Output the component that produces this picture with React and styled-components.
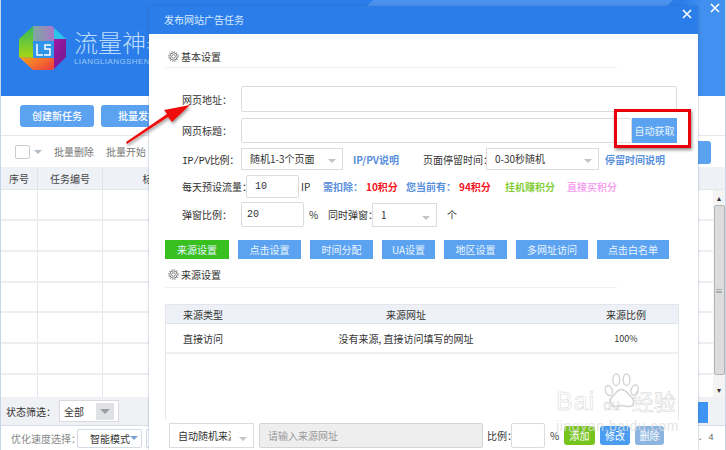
import React from "react";
import styled, { createGlobalStyle } from "styled-components";

const CJK = `"Noto Sans CJK SC", "Liberation Sans", sans-serif`;

function App() {
  return (
    <Desktop>
      <GlobalStyle />
      <MainWindow>
        <Header>
          <Streak />
          <Logo />
          <Brand>
            <BrandName>流量神器</BrandName>
            <BrandSub>LIANGLIANGSHEN</BrandSub>
          </Brand>
        </Header>
        <Toolbar>
          <ToolButton width={74}>创建新任务</ToolButton>
          <ToolButton width={74}>批量发布</ToolButton>
        </Toolbar>
        <BatchRow>
          <CheckBox />
          <SmallCaret />
          <BatchLink>批量删除</BatchLink>
          <BatchLink>批量开始</BatchLink>
        </BatchRow>
        <GridHead>
          <GridCol width={37}>序号</GridCol>
          <GridCol width={65}>任务编号</GridCol>
          <GridCol width={100}>标题</GridCol>
        </GridHead>
        <GridBody>
          {[31, 31, 31, 30, 31, 31, 22].map((h, i) => (
            <GridRow key={i} style={{ height: h }}>
              <GridCell width={37} />
              <GridCell width={65} />
            </GridRow>
          ))}
        </GridBody>
        <StatusBar>
          <StatusLabel>状态筛选：</StatusLabel>
          <StatusSelect>
            全部
            <StatusCaret />
          </StatusSelect>
        </StatusBar>
        <FootBar>
          <FootLabel>优化速度选择：</FootLabel>
          <FootSelect>
            智能模式
            <SmallCaret />
          </FootSelect>
          <FootSelect />
        </FootBar>
      </MainWindow>

      <WindowClose top={0} left={707} />

      <SideButton top={141} height={23} width={13} color="#5ba3f0" round />
      <SideButton top={402} height={21} width={10} color="#3d94f2" />
      <Version>0. 4</Version>

      <Scrollbar>
        <ScrollEnd>▴</ScrollEnd>
        <ScrollThumb>≡</ScrollThumb>
        <ScrollGap />
        <ScrollEnd>▾</ScrollEnd>
      </Scrollbar>

      <Dialog>
        <DialogTitle>
          发布网站广告任务
          <WindowClose top={0} left={530} />
        </DialogTitle>
        <DialogBody>
          <SectionHead>
            <Gear />
            基本设置
          </SectionHead>

          <FormRow top={18}>
            <FieldLabel width={59}>网页地址：</FieldLabel>
            <TextBox width={436} height={26} />
          </FormRow>
          <FormRow top={6}>
            <FieldLabel width={59}>网页标题：</FieldLabel>
            <TextBox width={391} height={25} />
            <FetchButton>自动获取</FetchButton>
          </FormRow>

          <FormRow top={5}>
            <FieldLabel width={59} mono>IP/PV比例：</FieldLabel>
            <SelectBox width={102}>
              随机1-3个页面
              <SelectCaret />
            </SelectBox>
            <LinkText left={10} width={70}>IP/PV说明</LinkText>
            <PlainText width={63}>页面停留时间：</PlainText>
            <SelectBox width={113}>
              0-30秒随机
              <SelectCaret />
            </SelectBox>
            <LinkText left={6}>停留时间说明</LinkText>
          </FormRow>

          <FormRow top={5}>
            <FieldLabel width={64}>每天预设流量：</FieldLabel>
            <TextBox width={53} height={23} inset={8}>10</TextBox>
            <PlainText left={2} width={22}>IP</PlainText>
            <LinkText width={43}>需扣除：</LinkText>
            <RedText width={40}>10积分</RedText>
            <LinkText width={53}>您当前有：</LinkText>
            <RedText width={46}>94积分</RedText>
            <ColorText color="#86cf3c" width={62}>挂机赚积分</ColorText>
            <ColorText color="#f6a6f0">直接买积分</ColorText>
          </FormRow>

          <FormRow top={4}>
            <FieldLabel width={59}>弹窗比例：</FieldLabel>
            <TextBox width={63} height={25} inset={5}>20</TextBox>
            <PlainText left={5} width={19}>%</PlainText>
            <PlainText width={44}>同时弹窗：</PlainText>
            <SelectBox width={65} height={24}>
              1
              <SelectCaret />
            </SelectBox>
            <PlainText left={10}>个</PlainText>
          </FormRow>

          <TabRow>
            <TabButton width={64} active>来源设置</TabButton>
            <TabButton width={63}>点击设置</TabButton>
            <TabButton width={63}>时间分配</TabButton>
            <TabButton width={53}>UA设置</TabButton>
            <TabButton width={63}>地区设置</TabButton>
            <TabButton width={72}>多网址访问</TabButton>
            <TabButton width={72}>点击白名单</TabButton>
          </TabRow>

          <SectionHead second>
            <Gear />
            来源设置
          </SectionHead>

          <SourceTable>
            <SourceHead>
              <SourceType>来源类型</SourceType>
              <SourceUrl>来源网址</SourceUrl>
              <SourceRatio>来源比例</SourceRatio>
            </SourceHead>
            <SourceRow>
              <SourceType>直接访问</SourceType>
              <SourceUrl>没有来源, 直接访问填写的网址</SourceUrl>
              <SourceRatio small>100%</SourceRatio>
            </SourceRow>
          </SourceTable>

          <AddRow>
            <SelectBox width={85} height={25}>
              <ClippedText>自动随机来源</ClippedText>
              <SelectCaret />
            </SelectBox>
            <UrlInput>请输入来源网址</UrlInput>
            <PlainText left={4} width={24}>比例：</PlainText>
            <TextBox width={34} height={25} />
            <PlainText left={5} width={9}>%</PlainText>
            <ActionButton width={31} color="#78c41e">添加</ActionButton>
            <ActionButton width={30} color="#4a9cf0">修改</ActionButton>
            <ActionButton width={29} color="#8cb4e0">删除</ActionButton>
          </AddRow>
        </DialogBody>
      </Dialog>

      <Overlay viewBox="0 0 726 450">
        <defs>
          <filter id="soft" x="-20%" y="-20%" width="140%" height="140%">
            <feDropShadow dx="1" dy="2" stdDeviation="1.5" floodOpacity="0.4" />
          </filter>
        </defs>
        <path
          d="M127 144 L168 117 L172 122 L190 105 L164 110 L167 114 L126 142 Z"
          fill="#ee1111"
          filter="url(#soft)"
        />
      </Overlay>

      <Highlight />

      <Watermark>
        <Paw viewBox="0 0 70 66">
          <g fill="none" stroke="#d4d4d4" strokeWidth="2.5">
            <ellipse cx="12" cy="34" rx="6" ry="9" transform="rotate(-20 12 34)" />
            <ellipse cx="25" cy="15" rx="6" ry="10" />
            <ellipse cx="43" cy="15" rx="6" ry="10" />
            <ellipse cx="57" cy="33" rx="6" ry="9" transform="rotate(20 57 33)" />
            <path d="M34 32 C26 32 24 40 18 45 C12 50 14 62 24 62 C29 62 31 60 35 60 C39 60 42 62 47 62 C56 62 58 50 51 45 C45 40 42 32 34 32 Z" />
          </g>
        </Paw>
        <MarkTop>
          <MarkWord>Bai</MarkWord>
          <MarkDu>du</MarkDu>
          <MarkCn>经验</MarkCn>
        </MarkTop>
        <MarkUrl>jingyan.baidu.com</MarkUrl>
      </Watermark>
    </Desktop>
  );
}

const GlobalStyle = createGlobalStyle`
  html, body {
    margin: 0;
    padding: 0;
    background: #fff;
  }
  * {
    box-sizing: border-box;
  }
`;

const Desktop = styled.div`
  position: relative;
  width: 726px;
  height: 450px;
  overflow: hidden;
  font-family: ${CJK};
  font-size: 10px;
  color: #333;
`;

const MainWindow = styled.div`
  display: flex;
  flex-direction: column;
  height: 450px;
  border-left: 1px solid #c5d6ea;
  border-right: 1px solid #c5d6ea;
`;

const Header = styled.div`
  position: relative;
  display: flex;
  gap: 8px;
  flex: none;
  height: 96px;
  padding: 26px 0 0 18px;
  overflow: hidden;
  background: linear-gradient(to right, #2b7de9 94%, #4291f0 97%);
`;

const Streak = styled.div`
  position: absolute;
  top: -30px;
  right: 40px;
  width: 300px;
  height: 36px;
  background: #4a92ee;
  transform: skewX(-45deg);
`;

const LogoSvg = styled.svg`
  width: 47px;
  height: 44px;
  flex: none;
`;

const Logo = () => (
  <LogoSvg viewBox="0 0 47 44">
    <defs>
      <linearGradient id="logoTop" x1="0" y1="0" x2="1" y2="0">
        <stop offset="0" stopColor="#7ca8a0" />
        <stop offset="1" stopColor="#a878c8" />
      </linearGradient>
      <linearGradient id="logoLeft" x1="0" y1="0" x2="0" y2="1">
        <stop offset="0" stopColor="#2fb85c" />
        <stop offset="1" stopColor="#a8d814" />
      </linearGradient>
      <linearGradient id="logoBottom" x1="0" y1="0" x2="1" y2="0.6">
        <stop offset="0" stopColor="#f8a818" />
        <stop offset="1" stopColor="#f0483c" />
      </linearGradient>
      <linearGradient id="logoRight" x1="0" y1="0" x2="1" y2="1">
        <stop offset="0" stopColor="#a01aa0" />
        <stop offset="1" stopColor="#701890" />
      </linearGradient>
    </defs>
    <polygon points="14,0 33,0 35,2 35,15 14,15" fill="url(#logoTop)" />
    <polygon points="35,2 47,13 35,13" fill="#2cc4ea" />
    <polygon points="35,13 47,13 47,31 35,43" fill="url(#logoRight)" />
    <polygon points="14,0 14,32 0,31 0,13" fill="url(#logoLeft)" />
    <polygon points="0,31 14,32 35,32 35,43 33,44 14,44" fill="url(#logoBottom)" />
    <rect x="14" y="15" width="21" height="17" fill="#2f94ea" />
    <path d="M18 18 v11 h6 M32 19 h-6 v4 h5 v6 h-6" fill="none" stroke="#fff" strokeWidth="1.5" />
  </LogoSvg>
);

const Brand = styled.div`
  display: flex;
  flex-direction: column;
  padding-top: 2px;
`;

const BrandName = styled.div`
  font-size: 24px;
  line-height: 27px;
  font-weight: 300;
  color: #bcdcfa;
  white-space: nowrap;
`;

const BrandSub = styled.div`
  font-family: "Liberation Sans", sans-serif;
  font-size: 8px;
  line-height: 14px;
  letter-spacing: 0.4px;
  color: #9cc8f6;
`;

const Toolbar = styled.div`
  display: flex;
  gap: 7px;
  flex: none;
  height: 39px;
  padding: 9px 0 0 19px;
  background: #fff;
`;

const ToolButton = styled.div`
  width: ${({ width }) => width}px;
  height: 22px;
  line-height: 22px;
  text-align: center;
  font-size: 10px;
  font-weight: 500;
  color: #fff;
  background: #5ba3f0;
  border-radius: 3px;
`;

const BatchRow = styled.div`
  display: flex;
  align-items: center;
  flex: none;
  height: 32px;
  padding-left: 14px;
  border-top: 1px solid #e6e8ec;
`;

const CheckBox = styled.div`
  width: 15px;
  height: 14px;
  background: #fff;
  border: 1px solid #ccc;
  border-radius: 2px;
`;

const SmallCaret = styled.span`
  display: inline-block;
  width: 0;
  height: 0;
  margin-left: 4px;
  border-left: 4px solid transparent;
  border-right: 4px solid transparent;
  border-top: 4px solid #b4bcc6;
`;

const BatchLink = styled.span`
  margin-left: 12px;
  color: #777;
  &:first-of-type {
    margin-left: 13px;
  }
`;

const GridHead = styled.div`
  display: flex;
  flex: none;
  height: 23px;
  background: #eef1f6;
  border-bottom: 1px solid #e4e7ec;
`;

const GridCol = styled.div`
  width: ${({ width }) => width}px;
  line-height: 23px;
  text-align: center;
  border-right: 1px solid #e0e3e8;
  color: #444;
`;

const GridBody = styled.div`
  flex: 1;
  padding-right: 12px;
  overflow: hidden;
`;

const GridRow = styled.div`
  display: flex;
  border-bottom: 2px solid #eceef1;
  &:last-child {
    border-bottom: 0;
  }
`;

const GridCell = styled.div`
  width: ${({ width }) => width}px;
  border-right: 1px solid #e4e6ea;
`;

const StatusBar = styled.div`
  display: flex;
  align-items: center;
  flex: none;
  height: 28px;
  padding-left: 5px;
  background: #f0f1f4;
`;

const StatusLabel = styled.span`
  width: 53px;
  color: #333;
`;

const StatusSelect = styled.div`
  display: flex;
  align-items: center;
  justify-content: space-between;
  width: 60px;
  height: 22px;
  padding: 0 4px;
  background: #fff;
  border: 1px solid #d8dade;
`;

const StatusCaret = styled.span`
  display: flex;
  width: 18px;
  height: 17px;
  background: #dfe1e4;
  &::after {
    content: "";
    margin: 6px 0 0 4px;
    width: 0;
    height: 0;
    border-left: 5px solid transparent;
    border-right: 5px solid transparent;
    border-top: 5px solid #9a9ea4;
  }
`;

const FootBar = styled.div`
  display: flex;
  align-items: center;
  flex: none;
  height: 25px;
  padding-left: 10px;
  border-top: 1px solid #d4dde8;
`;

const FootLabel = styled.span`
  flex: none;
  width: 66px;
  color: #888;
  white-space: nowrap;
`;

const FootSelect = styled.div`
  display: flex;
  align-items: center;
  justify-content: flex-end;
  width: 65px;
  height: 19px;
  margin-right: 4px;
  padding-right: 3px;
  border: 1px solid #d4dbe4;
  border-radius: 2px;
  color: #333;
  ${SmallCaret} {
    margin-left: 0;
    border-top-color: #7aa4d4;
  }
`;

const SideButton = styled.div`
  position: absolute;
  top: ${({ top }) => top}px;
  left: 698px;
  width: ${({ width }) => width}px;
  height: ${({ height }) => height}px;
  background: ${({ color }) => color};
  border-radius: ${({ round }) => (round ? "0 3px 3px 0" : 0)};
`;

const Version = styled.span`
  position: absolute;
  top: 431px;
  left: 692px;
  font-family: "Liberation Mono", monospace;
  font-size: 9px;
  line-height: 14px;
  color: #666;
  white-space: pre;
`;

const Scrollbar = styled.div`
  position: absolute;
  top: 190px;
  left: 713px;
  width: 12px;
  height: 207px;
  display: flex;
  flex-direction: column;
  align-items: center;
  background: #f4f4f4;
`;

const ScrollEnd = styled.span`
  flex: none;
  height: 15px;
  font-size: 8px;
  line-height: 15px;
  color: #333;
`;

const ScrollThumb = styled.div`
  flex: none;
  width: 11px;
  height: 170px;
  text-align: center;
  line-height: 170px;
  font-size: 8px;
  color: #888;
  background: #dcdcdc;
  border: 1px solid #b4b4b4;
  border-radius: 2px;
`;

const ScrollGap = styled.div`
  flex: 1;
`;

const WindowCloseMark = styled.svg`
  position: absolute;
  top: ${({ top }) => top}px;
  left: ${({ left }) => left}px;
  width: 14px;
  height: 14px;
`;

const WindowClose = ({ top, left }) => (
  <WindowCloseMark top={top + 1} left={left + 1} viewBox="0 0 14 14">
    <path d="M3 3 L11 11 M11 3 L3 11" stroke="#fff" strokeWidth="1.6" />
  </WindowCloseMark>
);

const Dialog = styled.div`
  position: absolute;
  top: 6px;
  left: 149px;
  width: 549px;
  height: 444px;
  display: flex;
  flex-direction: column;
  box-shadow: 0 0 2px rgba(60, 90, 130, 0.5);
`;

const DialogTitle = styled.div`
  position: relative;
  flex: none;
  height: 28px;
  padding-left: 15px;
  line-height: 28px;
  font-size: 10px;
  color: #d8ebff;
  background: #2b7de9;
`;

const DialogBody = styled.div`
  flex: 1;
  display: flex;
  flex-direction: column;
  padding: 16px 0 0 16px;
  background: #fff;
`;

const SectionHead = styled.div`
  display: flex;
  align-items: center;
  gap: 2px;
  flex: none;
  width: 452px;
  height: ${({ second }) => (second ? 23 : 18)}px;
  margin-top: ${({ second }) => (second ? 6 : 0)}px;
  padding-left: 3px;
  padding-bottom: ${({ second }) => (second ? 3 : 5)}px;
  border-bottom: 1px solid #f0f0f0;
  color: #333;
`;

const GearSvg = styled.svg`
  width: 11px;
  height: 11px;
  flex: none;
`;

const Gear = () => (
  <GearSvg viewBox="0 0 12 12">
    <circle cx="6" cy="6" r="2" fill="none" stroke="#777" strokeWidth="1" />
    <circle cx="6" cy="6" r="4" fill="none" stroke="#777" strokeWidth="1" />
    <circle cx="6" cy="6" r="5.2" fill="none" stroke="#888" strokeWidth="1.2" strokeDasharray="1.4 1.3" />
  </GearSvg>
);

const FormRow = styled.div`
  display: flex;
  align-items: center;
  flex: none;
  margin-top: ${({ top }) => top}px;
  padding-left: 17px;
`;

const FieldLabel = styled.span`
  flex: none;
  width: ${({ width }) => width}px;
  white-space: nowrap;
  color: #333;
  font-family: ${({ mono }) => (mono ? `"Liberation Mono", ${CJK}` : CJK)};
  letter-spacing: ${({ mono }) => (mono ? "-0.4px" : 0)};
`;

const TextBox = styled.div`
  flex: none;
  width: ${({ width }) => width}px;
  height: ${({ height }) => height}px;
  line-height: ${({ height }) => height - 2}px;
  padding-left: ${({ inset }) => inset || 0}px;
  background: #fff;
  border: 1px solid #dcdcdc;
  border-radius: 2px;
  font-family: "Liberation Mono", monospace;
  color: #333;
`;

const FetchButton = styled.div`
  flex: none;
  width: 45px;
  height: 25px;
  line-height: 25px;
  text-align: center;
  color: #e8f3ff;
  background: #5ba3f0;
`;

const SelectBox = styled.div`
  position: relative;
  flex: none;
  width: ${({ width }) => width}px;
  height: ${({ height }) => height || 22}px;
  line-height: ${({ height }) => (height || 22) - 2}px;
  padding-left: 8px;
  background: #fff;
  border: 1px solid #dcdcdc;
  white-space: nowrap;
  overflow: hidden;
  color: #333;
`;

const ClippedText = styled.span`
  display: block;
  width: 53px;
  overflow: hidden;
`;

const SelectCaret = styled.span`
  position: absolute;
  right: 6px;
  bottom: 6px;
  width: 0;
  height: 0;
  border-left: 4px solid transparent;
  border-right: 4px solid transparent;
  border-top: 4px solid #c4c4c4;
`;

const LinkText = styled.span`
  flex: none;
  width: ${({ width }) => (width ? `${width}px` : "auto")};
  margin-left: ${({ left }) => left || 0}px;
  font-weight: 700;
  color: #5a8fdc;
  white-space: nowrap;
`;

const PlainText = styled.span`
  flex: none;
  width: ${({ width }) => (width ? `${width}px` : "auto")};
  margin-left: ${({ left }) => left || 0}px;
  color: #333;
  white-space: nowrap;
`;

const RedText = styled.span`
  flex: none;
  width: ${({ width }) => width}px;
  font-weight: 700;
  color: #f5141e;
  white-space: nowrap;
`;

const ColorText = styled.span`
  flex: none;
  width: ${({ width }) => (width ? `${width}px` : "auto")};
  font-weight: 700;
  color: ${({ color }) => color};
  white-space: nowrap;
`;

const TabRow = styled.div`
  display: flex;
  gap: 9px;
  flex: none;
  margin-top: 13px;
`;

const TabButton = styled.div`
  width: ${({ width }) => width}px;
  height: 19px;
  line-height: 19px;
  text-align: center;
  color: #eaf4ff;
  background: ${({ active }) => (active ? "#38c020" : "#5ba3f0")};
`;

const SourceTable = styled.div`
  flex: none;
  width: 514px;
  height: 116px;
  margin-top: 16px;
  border: 1px solid #e4e6ea;
  border-bottom: 0;
`;

const SourceHead = styled.div`
  display: flex;
  align-items: center;
  height: 19px;
  background: #edf1f7;
  border-bottom: 1px solid #e0e4ea;
`;

const SourceRow = styled.div`
  display: flex;
  align-items: center;
  height: 30px;
  border-bottom: 2px solid #eeeff2;
`;

const SourceType = styled.div`
  flex: none;
  width: 118px;
  padding-left: 17px;
`;

const SourceUrl = styled.div`
  flex: none;
  width: 244px;
  text-align: center;
`;

const SourceRatio = styled.div`
  flex: none;
  width: 150px;
  padding-left: 46px;
  text-align: center;
  font-size: ${({ small }) => (small ? 9 : 10)}px;
`;

const AddRow = styled.div`
  display: flex;
  align-items: center;
  flex: none;
  margin-top: 3px;
  padding-left: 4px;
`;

const UrlInput = styled.div`
  flex: none;
  width: 224px;
  height: 25px;
  margin-left: 5px;
  padding-left: 8px;
  line-height: 23px;
  color: #999;
  background: #eeeeee;
  border: 1px solid #d4d4d4;
  border-radius: 2px;
`;

const ActionButton = styled.div`
  flex: none;
  width: ${({ width }) => width}px;
  height: 19px;
  margin-left: 5px;
  line-height: 19px;
  text-align: center;
  font-size: 10px;
  color: #fff;
  background: ${({ color }) => color};
  border-radius: 3px;
  &:first-of-type {
    margin-left: 0;
  }
`;

const Overlay = styled.svg`
  position: absolute;
  top: 0;
  left: 0;
  width: 726px;
  height: 450px;
  pointer-events: none;
`;

const Highlight = styled.div`
  position: absolute;
  top: 109px;
  left: 614px;
  width: 77px;
  height: 39px;
  border: 3px solid #e8000c;
  box-shadow: 1px 2px 3px rgba(0, 0, 0, 0.45);
`;

const Watermark = styled.div`
  position: absolute;
  top: 370px;
  left: 556px;
  width: 170px;
  color: rgba(255, 255, 255, 0.7);
  font-family: "Liberation Sans", sans-serif;
  -webkit-text-stroke: 0.5px #d4d4d4;
`;

const Paw = styled.svg`
  position: absolute;
  top: 0;
  left: 46px;
  width: 40px;
  height: 40px;
`;

const MarkTop = styled.div`
  display: flex;
  align-items: baseline;
  padding-top: 16px;
  height: 44px;
`;

const MarkWord = styled.span`
  font-size: 25px;
  line-height: 28px;
  letter-spacing: 1px;
`;

const MarkDu = styled.span`
  margin-left: 8px;
  font-size: 15px;
  line-height: 28px;
`;

const MarkCn = styled.span`
  margin-left: 12px;
  font-family: ${CJK};
  font-size: 22px;
  line-height: 28px;
`;

const MarkUrl = styled.div`
  margin-top: 4px;
  font-size: 14px;
  line-height: 16px;
  letter-spacing: 0.6px;
  white-space: nowrap;
  color: rgba(222, 222, 222, 0.8);
  -webkit-text-stroke: 0;
`;

export default App;
